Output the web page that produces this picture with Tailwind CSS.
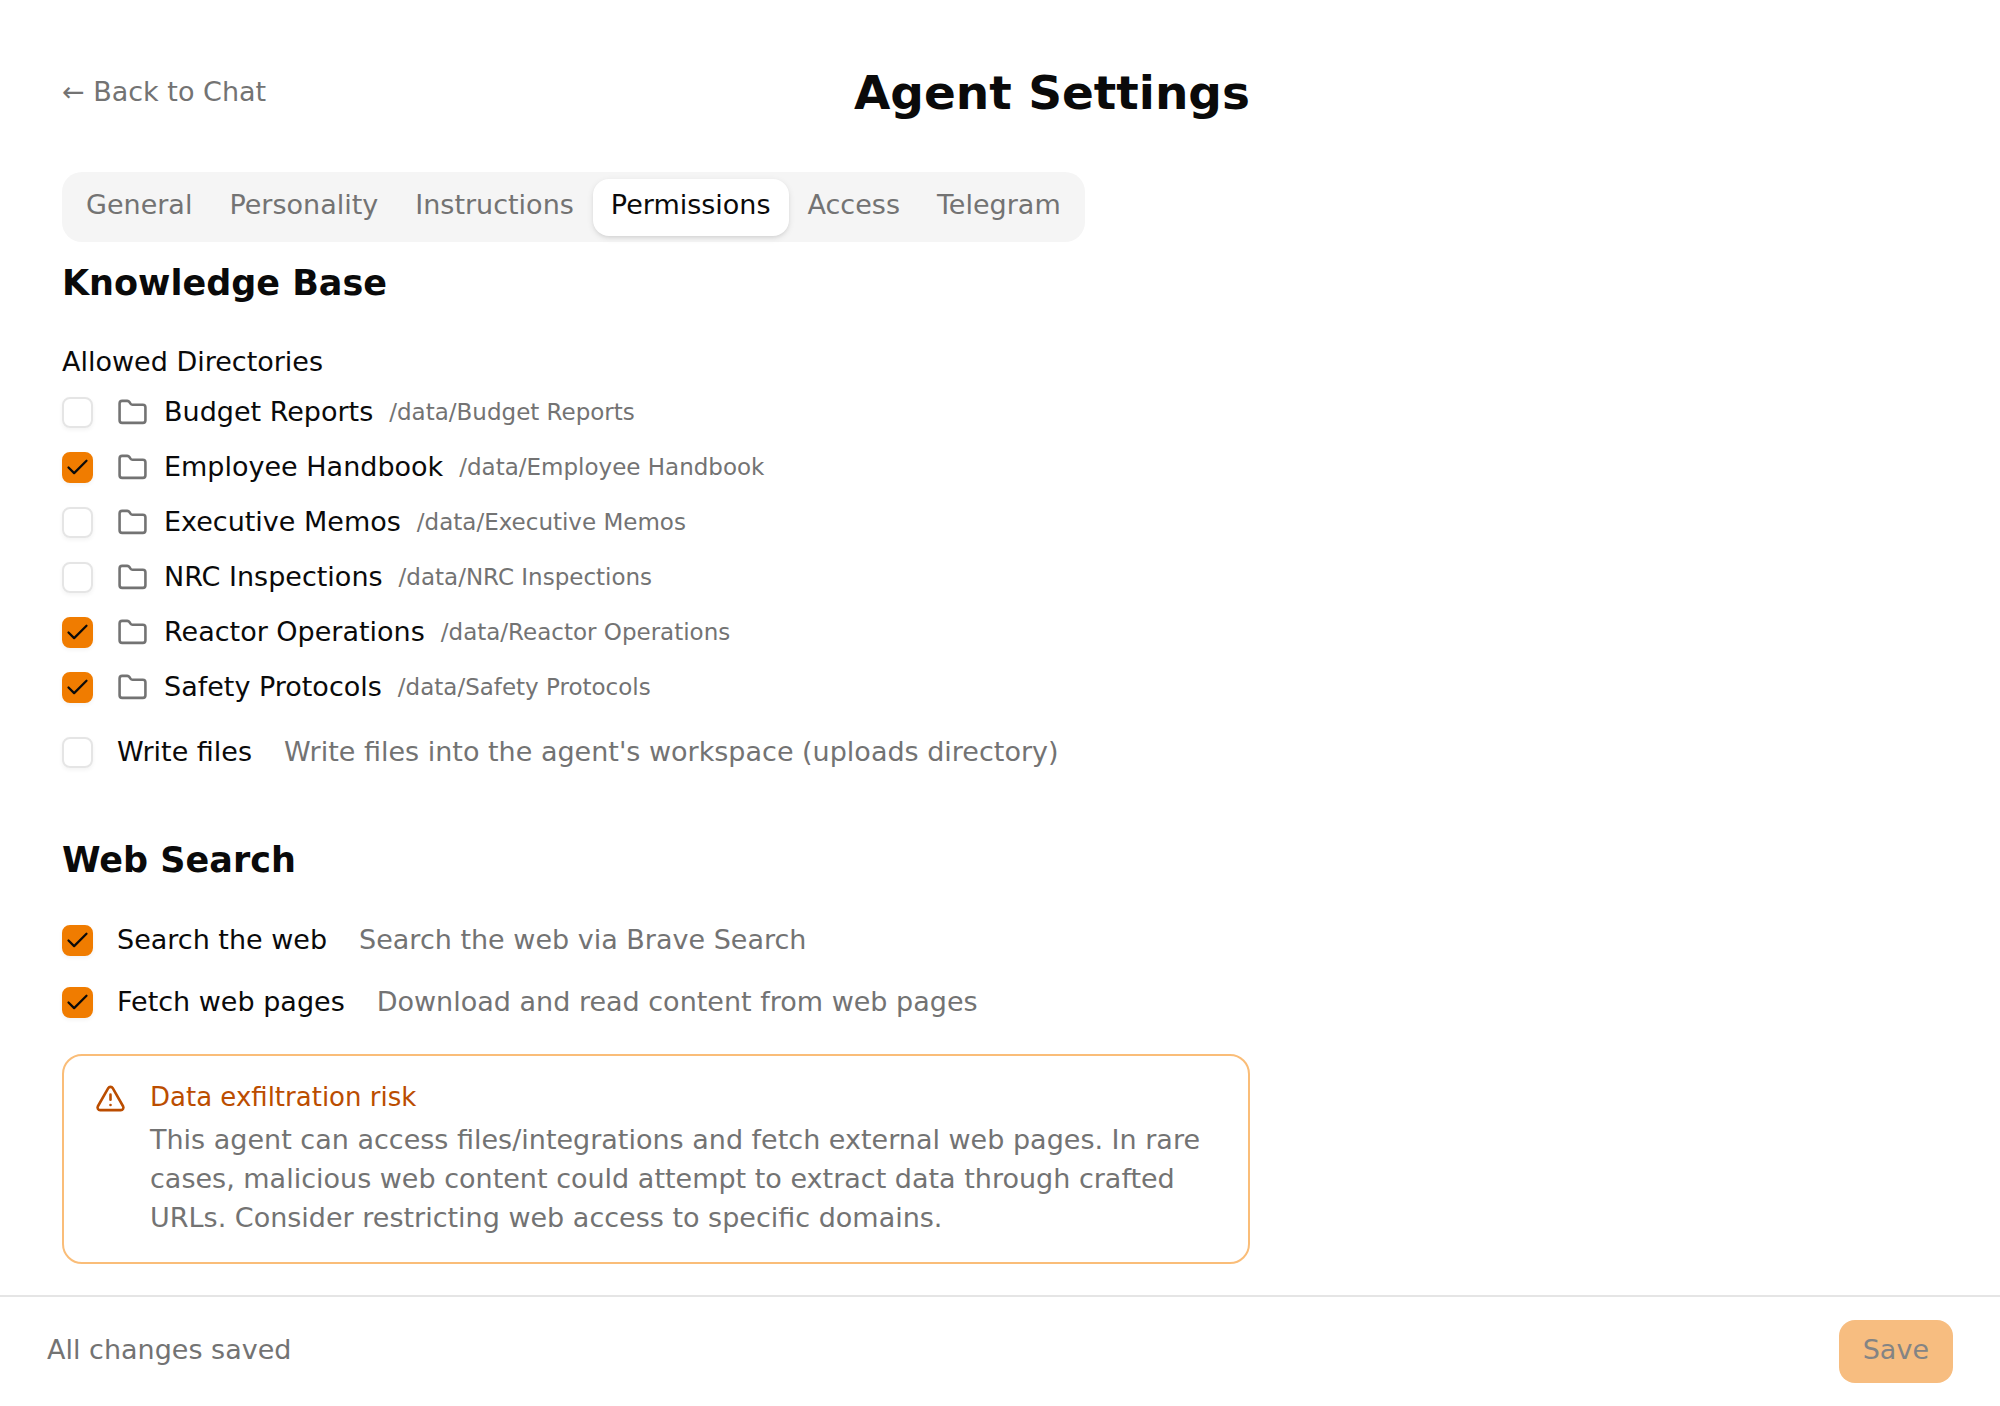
<!DOCTYPE html>
<html lang="en">
<head>
    <meta charset="UTF-8" />
    <meta name="viewport" content="width=device-width, initial-scale=1.0" />
    <title>Agent Settings</title>
    <script src="https://cdn.jsdelivr.net/npm/@tailwindcss/browser@4"></script>
    <style>
        body {
            font-family: 'DejaVu Sans', sans-serif;
        }
    </style>
</head>
<body class="bg-white text-neutral-950 text-[27px] leading-[39px] min-h-screen flex flex-col">

    <!-- Icons -->
    <svg class="hidden" aria-hidden="true">
        <symbol id="icon-check" viewBox="0 0 24 24" fill="none" stroke="currentColor" stroke-width="2" stroke-linecap="round" stroke-linejoin="round">
            <path d="M20 6 9 17l-5-5" />
        </symbol>
        <symbol id="icon-folder" viewBox="0 0 24 24" fill="none" stroke="currentColor" stroke-width="2" stroke-linecap="round" stroke-linejoin="round">
            <path d="M20 20a2 2 0 0 0 2-2V8a2 2 0 0 0-2-2h-7.9a2 2 0 0 1-1.69-.9L9.6 3.9A2 2 0 0 0 7.93 3H4a2 2 0 0 0-2 2v13a2 2 0 0 0 2 2Z" />
        </symbol>
        <symbol id="icon-alert" viewBox="0 0 24 24" fill="none" stroke="currentColor" stroke-width="2" stroke-linecap="round" stroke-linejoin="round">
            <path d="m21.73 18-8-14a2 2 0 0 0-3.48 0l-8 14A2 2 0 0 0 4 21h16a2 2 0 0 0 1.73-3" />
            <path d="M12 9v4" />
            <path d="M12 17h.01" />
        </symbol>
    </svg>

    <main class="flex-grow w-full max-w-[1312px] px-[62px] pt-[62px] pb-7">
        <header class="flex items-center justify-between mb-[48px]">
            <a href="#" class="pb-1 text-neutral-500 hover:text-neutral-950">← Back to Chat</a>
            <h1 class="text-[47px] leading-[62px] font-bold">Agent Settings</h1>
        </header>

        <nav role="tablist" class="inline-flex items-center gap-px h-[70px] px-[6px] pt-[7px] pb-[6px] rounded-[20px] bg-neutral-100 text-neutral-500">
            <button type="button" role="tab" class="h-full px-[18px] rounded-2xl pb-1.5">General</button>
            <button type="button" role="tab" class="h-full px-[18px] rounded-2xl pb-1.5">Personality</button>
            <button type="button" role="tab" class="h-full px-[18px] rounded-2xl pb-1.5">Instructions</button>
            <button type="button" role="tab" aria-selected="true" class="h-full px-[18px] rounded-2xl pb-1.5 bg-white text-neutral-950 shadow-[0_2px_6px_rgb(0_0_0/0.1),0_2px_4px_-2px_rgb(0_0_0/0.1)]">Permissions</button>
            <button type="button" role="tab" class="h-full px-[18px] rounded-2xl pb-1.5">Access</button>
            <button type="button" role="tab" class="h-full px-[18px] rounded-2xl pb-1.5">Telegram</button>
        </nav>

        <section class="mt-[14px]">
            <h2 class="text-[35px] leading-[54px] font-bold">Knowledge Base</h2>

            <h3 class="mt-8">Allowed Directories</h3>
            <ul id="directories" class="mt-3 flex flex-col gap-4"></ul>

            <label class="mt-[26px] h-[39px] flex items-center gap-6">
                <span class="grid place-items-center shrink-0">
                    <input type="checkbox" class="peer col-start-1 row-start-1 appearance-none size-[31px] rounded-lg border-2 border-neutral-200 shadow-[0_2px_4px_rgb(0_0_0/0.05)] checked:bg-[#f07c00] checked:border-[#f07c00]">
                    <svg class="col-start-1 row-start-1 size-[27px] pointer-events-none hidden peer-checked:block"><use href="#icon-check" /></svg>
                </span>
                <span class="pb-0.5">Write files</span>
                <span class="ml-2 pb-0.5 text-neutral-500">Write files into the agent's workspace (uploads directory)</span>
            </label>
        </section>

        <section class="mt-[61px]">
            <h2 class="text-[35px] leading-[54px] font-bold">Web Search</h2>

            <label class="mt-[34px] h-[39px] flex items-center gap-6">
                <span class="grid place-items-center shrink-0">
                    <input type="checkbox" checked class="peer col-start-1 row-start-1 appearance-none size-[31px] rounded-lg border-2 border-neutral-200 shadow-[0_2px_4px_rgb(0_0_0/0.05)] checked:bg-[#f07c00] checked:border-[#f07c00]">
                    <svg class="col-start-1 row-start-1 size-[27px] pointer-events-none hidden peer-checked:block"><use href="#icon-check" /></svg>
                </span>
                <span class="pb-0.5">Search the web</span>
                <span class="ml-2 pb-0.5 text-neutral-500">Search the web via Brave Search</span>
            </label>
            <label class="mt-[23px] h-[39px] flex items-center gap-6">
                <span class="grid place-items-center shrink-0">
                    <input type="checkbox" checked class="peer col-start-1 row-start-1 appearance-none size-[31px] rounded-lg border-2 border-neutral-200 shadow-[0_2px_4px_rgb(0_0_0/0.05)] checked:bg-[#f07c00] checked:border-[#f07c00]">
                    <svg class="col-start-1 row-start-1 size-[27px] pointer-events-none hidden peer-checked:block"><use href="#icon-check" /></svg>
                </span>
                <span class="pb-0.5">Fetch web pages</span>
                <span class="ml-2 pb-0.5 text-neutral-500">Download and read content from web pages</span>
            </label>

            <div role="alert" class="mt-8 flex gap-6 border-2 border-[#fabd78] rounded-[20px] px-[31px] py-[25px]">
                <svg class="size-[31px] shrink-0 mt-0.5 text-[#bb4d00]"><use href="#icon-alert" /></svg>
                <div>
                    <p class="text-[#bb4d00] text-[26px] leading-[33px] mb-1.5">Data exfiltration risk</p>
                    <p class="text-neutral-500">This agent can access files/integrations and fetch external web pages. In rare cases, malicious web content could attempt to extract data through crafted URLs. Consider restricting web access to specific domains.</p>
                </div>
            </div>
        </section>
    </main>

    <footer class="sticky bottom-0 bg-white border-t-2 border-neutral-200 px-[47px] py-[23px] flex items-center justify-between">
        <span class="pb-1 text-neutral-500">All changes saved</span>
        <button type="button" disabled class="h-[63px] px-6 pb-1 rounded-2xl bg-[#f7bd80] text-[#848484]">Save</button>
    </footer>

    <template id="directory-row">
        <li>
            <label class="h-[39px] flex items-center">
                <span class="grid place-items-center shrink-0">
                    <input type="checkbox" class="peer col-start-1 row-start-1 appearance-none size-[31px] rounded-lg border-2 border-neutral-200 shadow-[0_2px_4px_rgb(0_0_0/0.05)] checked:bg-[#f07c00] checked:border-[#f07c00]">
                    <svg class="col-start-1 row-start-1 size-[27px] pointer-events-none hidden peer-checked:block"><use href="#icon-check" /></svg>
                </span>
                <svg class="ml-6 size-[31px] shrink-0 text-neutral-500"><use href="#icon-folder" /></svg>
                <span data-name class="ml-4 pb-0.5"></span>
                <span data-path class="ml-4 text-[23px] text-neutral-500"></span>
            </label>
        </li>
    </template>

    <script>
        const directories = [
            { name: 'Budget Reports', allowed: false },
            { name: 'Employee Handbook', allowed: true },
            { name: 'Executive Memos', allowed: false },
            { name: 'NRC Inspections', allowed: false },
            { name: 'Reactor Operations', allowed: true },
            { name: 'Safety Protocols', allowed: true }
        ];

        const list = document.getElementById('directories');
        const template = document.getElementById('directory-row');

        directories.forEach(function(dir) {
            const row = template.content.cloneNode(true);
            row.querySelector('input').checked = dir.allowed;
            row.querySelector('[data-name]').textContent = dir.name;
            row.querySelector('[data-path]').textContent = '/data/' + dir.name;
            list.appendChild(row);
        });
    </script>
</body>
</html>
